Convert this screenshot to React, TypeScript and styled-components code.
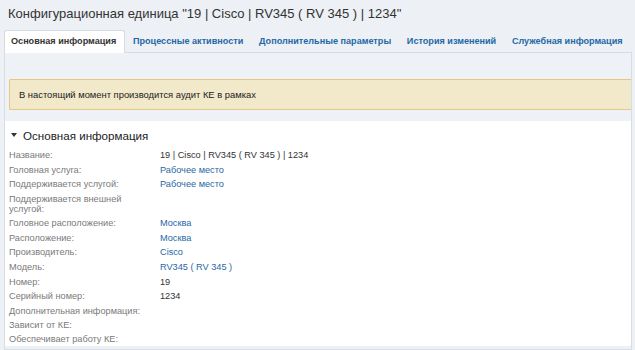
import React from "react"
import styled, { createGlobalStyle } from "styled-components"

const Global = createGlobalStyle`
  html, body {
    margin: 0;
    padding: 0;
    background: #edf0f5;
    font-family: "Liberation Sans", Arial, sans-serif;
  }
`

const Page = styled.div`
  width: 635px;
  height: 350px;
  overflow: hidden;
  padding: 0 3px 0 4px;
  box-sizing: border-box;
  background: #edf0f5;
`

const Title = styled.h1`
  margin: 0;
  height: 30px;
  padding: 6px 0 0 4px;
  box-sizing: border-box;
  font-size: 13px;
  line-height: 16px;
  font-weight: normal;
  color: #333;
  white-space: nowrap;
`

const TabBar = styled.ul`
  display: flex;
  margin: 0;
  padding: 0;
  list-style: none;
  height: 22px;
  border-bottom: 1px solid #d6dce4;
`

const Tab = styled.li<{ $active?: boolean }>`
  padding: 0 7.7px 0 6px;
  margin-right: ${p => (p.$active ? "1px" : "0")};
  line-height: 21px;
  font-size: 9.1px;
  font-weight: bold;
  white-space: nowrap;
  color: ${p => (p.$active ? "#333" : "#1f68a6")};
  background: ${p => (p.$active ? "#fff" : "transparent")};
  border: 1px solid ${p => (p.$active ? "#d6dce4" : "transparent")};
  border-bottom: none;
  border-radius: 3px 3px 0 0;
  height: ${p => (p.$active ? "23px" : "22px")};
  box-sizing: border-box;
`

const Panel = styled.div`
  border: 1px solid #d8dde5;
  border-top: none;
  height: 297px;
  box-sizing: border-box;
`

const AlertZone = styled.div`
  background: #eef1f6;
  padding: 26px 0 11px 4px;
`

const Alert = styled.div`
  background: #f1e9c9;
  border: 1px solid #e8c77e;
  border-right: none;
  border-radius: 2px 0 0 2px;
  height: 31px;
  box-sizing: border-box;
  padding: 0 9px;
  line-height: 29px;
  font-size: 9.4px;
  color: #222;
`

const Content = styled.div`
  background: #fff;
  padding: 6px 4px 0 4px;
`

const SectionTitle = styled.h2`
  margin: 0 0 5px 0;
  display: flex;
  align-items: center;
  gap: 6px;
  font-size: 11.6px;
  font-weight: normal;
  color: #222;
  height: 16px;
`

const Caret = styled.span`
  display: inline-block;
  width: 0;
  height: 0;
  margin-left: 2px;
  border-left: 3px solid transparent;
  border-right: 3px solid transparent;
  border-top: 4px solid #333;
`

const Fields = styled.dl`
  display: grid;
  grid-template-columns: 151px 1fr;
  margin: 0;
  font-size: 9.2px;
`

const Label = styled.dt`
  color: #7a7a7a;
  line-height: 10.5px;
  padding: 2px 8px 1.5px 0;
`

const Value = styled.dd<{ $link?: boolean }>`
  margin: 0;
  color: ${p => (p.$link ? "#1f68a6" : "#333")};
  line-height: 14.6px;
`

type Field = { label: string; value?: string; link?: boolean }

const fields: Field[] = [
  { label: "Название:", value: "19 | Cisco | RV345 ( RV 345 ) | 1234" },
  { label: "Головная услуга:", value: "Рабочее место", link: true },
  { label: "Поддерживается услугой:", value: "Рабочее место", link: true },
  { label: "Поддерживается внешней услугой:" },
  { label: "Головное расположение:", value: "Москва", link: true },
  { label: "Расположение:", value: "Москва", link: true },
  { label: "Производитель:", value: "Cisco", link: true },
  { label: "Модель:", value: "RV345 ( RV 345 )", link: true },
  { label: "Номер:", value: "19" },
  { label: "Серийный номер:", value: "1234" },
  { label: "Дополнительная информация:" },
  { label: "Зависит от КЕ:" },
  { label: "Обеспечивает работу КЕ:" },
]

const tabs = [
  "Основная информация",
  "Процессные активности",
  "Дополнительные параметры",
  "История изменений",
  "Служебная информация",
]

const App = () => {
  return (
    <Page>
      <Global />
      <Title>Конфигурационная единица "19 | Cisco | RV345 ( RV 345 ) | 1234"</Title>
      <TabBar>
        {tabs.map((t, i) => (
          <Tab key={t} $active={i === 0}>{t}</Tab>
        ))}
      </TabBar>
      <Panel>
        <AlertZone>
          <Alert>В настоящий момент производится аудит КЕ в рамках</Alert>
        </AlertZone>
        <Content>
          <SectionTitle><Caret />Основная информация</SectionTitle>
          <Fields>
            {fields.map(f => (
              <React.Fragment key={f.label}>
                <Label>{f.label}</Label>
                <Value $link={f.link}>{f.value ?? ""}</Value>
              </React.Fragment>
            ))}
          </Fields>
        </Content>
      </Panel>
    </Page>
  )
}

export default App
